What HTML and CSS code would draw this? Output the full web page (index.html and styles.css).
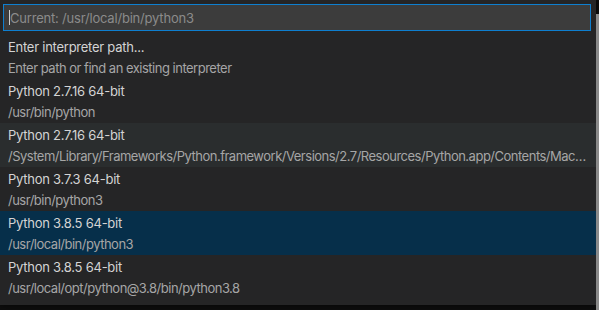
FILE: index.html
```html
<!DOCTYPE html>
<html>
<head>
<meta charset="utf-8">
<link rel="stylesheet" href="styles.css">
</head>
<body>
<div class="screen">
  <div class="panel">
    <div class="input"><span class="caret"></span><span class="placeholder">Current: /usr/local/bin/python3</span></div>
    <ul class="list">
      <li class="item"><div class="label">Enter interpreter path...</div><div class="desc">Enter path or find an existing interpreter</div></li>
      <li class="item"><div class="label">Python 2.7.16 64-bit</div><div class="desc">/usr/bin/python</div></li>
      <li class="item hover"><div class="label">Python 2.7.16 64-bit</div><div class="desc">/System/Library/Frameworks/Python.framework/Versions/2.7/Resources/Python.app/Contents/MacOS/Python</div></li>
      <li class="item"><div class="label">Python 3.7.3 64-bit</div><div class="desc">/usr/bin/python3</div></li>
      <li class="item selected"><div class="label">Python 3.8.5 64-bit</div><div class="desc">/usr/local/bin/python3</div></li>
      <li class="item"><div class="label">Python 3.8.5 64-bit</div><div class="desc">/usr/local/opt/python@3.8/bin/python3.8</div></li>
    </ul>
  </div>
  <div class="edge"></div>
</div>
</body>
</html>
```
FILE: styles.css
```css
html, body {
  margin: 0;
  padding: 0;
  background: #0d0d0d;
  width: 599px;
  height: 310px;
  overflow: hidden;
}
.screen {
  display: flex;
  align-items: flex-start;
}
.panel {
  width: 596px;
  height: 305px;
  background: #252526;
  box-sizing: border-box;
  padding-top: 4px;
  font-family: Inter, "Noto Sans", sans-serif;
  font-size: 13px;
  box-shadow: 0 0 6px rgba(0,0,0,0.6);
}
.edge {
  width: 3px;
  height: 300px;
  margin-top: 14px;
  background: #8a8a8a;
}
.input {
  margin: 0 5px 0 3px;
  height: 27px;
  box-sizing: border-box;
  border: 1px solid #0e7fd0;
  background: #3c3c3c;
  display: flex;
  align-items: center;
  padding-left: 5px;
}
.caret {
  width: 1px;
  height: 15px;
  background: #cccccc;
}
.placeholder {
  color: #8b8b8b;
  letter-spacing: -0.2px;
  padding-top: 1px;
}
.list {
  list-style: none;
  margin: 4px 0 0 0;
  padding: 0;
}
.item {
  height: 44px;
  box-sizing: border-box;
  padding: 2px 5px 0 8px;
  display: flex;
  flex-direction: column;
  justify-content: center;
}
.item.hover { background: #2a2d2e; }
.item.selected { background: #062f4a; }
.label {
  color: #d4d4d4;
  line-height: 21px;
  white-space: nowrap;
  letter-spacing: -0.25px;
}
.desc {
  color: #a6a6a6;
  line-height: 21px;
  white-space: nowrap;
  overflow: hidden;
  text-overflow: ellipsis;
  letter-spacing: -0.5px;
}
```
